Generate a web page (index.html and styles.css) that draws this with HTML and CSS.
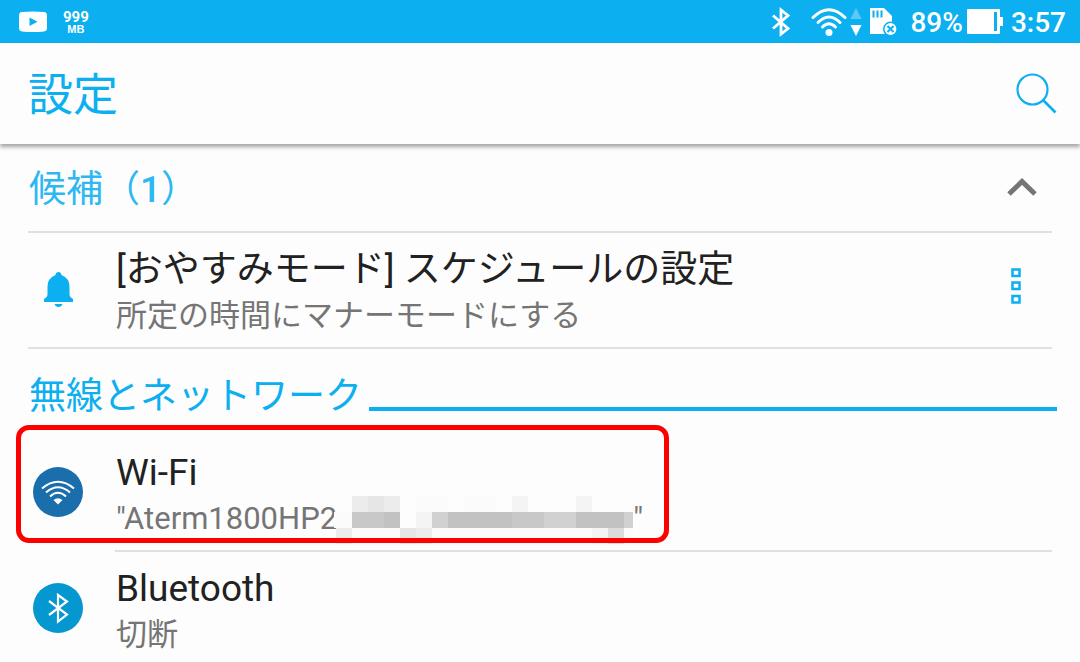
FILE: index.html
```
<!DOCTYPE html>
<html lang="ja">
<head>
    <meta charset="UTF-8">
    <meta name="viewport" content="width=device-width, initial-scale=1.0">
    <title>設定</title>
    <link rel="stylesheet" href="styles.css">
</head>
<body>
    <div class="status-bar">
        <div class="status-left">
            <svg width="30" height="22" viewBox="0 0 30 22">
                <path fill="#fff" fill-rule="evenodd" d="M4 1Q15 0 26 1Q29 1 29 5V17Q29 20 26 20.500Q15 21.500 4 20.500Q1 20 1 17V5Q1 1 4 1ZM11.500 6.500V15L19.500 10.700Z"/>
            </svg>
            <div class="data-limit">
                <span class="data-amount">999</span>
                <span class="data-unit">MB</span>
            </div>
        </div>
        <div class="status-right">
            <svg class="status-bluetooth" width="20" height="30" viewBox="0 0 20 30">
                <path fill="none" stroke="#fff" stroke-width="2.800" d="M2 8.500L17 21.500L10 27V3L17 8.500L2 21.500"/>
            </svg>
            <svg class="status-wifi" width="36" height="30" viewBox="0 0 36 30">
                <g fill="none" stroke="#fff" stroke-width="3" stroke-linecap="round">
                    <path d="M2 10.500Q18 -5 34 10.500"/>
                    <path d="M7 15.500Q18 4.500 29 15.500"/>
                    <path d="M11.500 20Q18 13.500 24.500 20"/>
                </g>
                <circle cx="18" cy="25.500" r="3.500" fill="#fff"/>
            </svg>
            <svg width="12" height="30" viewBox="0 0 12 30">
                <path fill="#5bc8f5" d="M6 1L11.500 12H.5Z"/>
                <path fill="#fff" d="M.5 18H11.500L6 29Z"/>
            </svg>
            <svg class="status-card" width="28" height="30" viewBox="0 0 28 30">
                <path fill="#fff" d="M0 1H14L22 9V27H0Z"/>
                <path stroke="#0cafef" stroke-width="2" d="M3.500 3.500V10.500M7.500 3.500V10.500M11.500 3.500V10.500"/>
                <circle cx="20.500" cy="22" r="6.700" fill="#fff" stroke="#0cafef" stroke-width="1.600"/>
                <path stroke="#0cafef" stroke-width="2" d="M17.500 19L23.500 25M23.500 19L17.500 25"/>
            </svg>
            <span class="status-text">89%</span>
            <svg class="status-battery" width="36" height="26" viewBox="0 0 36 26">
                <path fill="#fff" fill-rule="evenodd" d="M1 0H32Q33 0 33 1V8H36V17H33V24Q33 25 32 25H1Q0 25 0 24V1Q0 0 1 0ZM27 3V22H30V3Z"/>
            </svg>
            <span class="status-text">3:57</span>
        </div>
    </div>

    <header class="header">
        <h1 class="title">設定</h1>
        <button class="icon-button" aria-label="検索">
            <svg width="42" height="42" viewBox="0 0 42 42" fill="none" stroke="#0cafef">
                <circle cx="17.500" cy="16.500" r="15" stroke-width="2.200"/>
                <path d="M28 27L40.500 39.500" stroke-width="2.600"/>
            </svg>
        </button>
    </header>

    <main>
        <section>
            <div class="section-header suggestions">
                <h2 class="section-title">候補（<span class="count">1</span>）</h2>
                <button class="icon-button" aria-label="折りたたむ">
                    <svg width="30" height="20" viewBox="0 0 30 20">
                        <path fill="none" stroke="#757575" stroke-width="5" d="M2 16L15 3.500L28 16"/>
                    </svg>
                </button>
            </div>
            <div class="item suggestion">
                <svg class="item-icon" width="50" height="50" viewBox="0 0 50 50" fill="#0cafef">
                    <path d="M25.500 8Q28 8 28.500 11Q36.500 14 36.500 23V31Q36.500 33 40 35V38H11V35Q14.500 33 14.500 31V23Q14.500 14 22.500 11Q23 8 25.500 8Z"/>
                    <path d="M21.500 40H29.500Q28.500 43 25.500 43Q22.500 43 21.500 40Z"/>
                </svg>
                <a class="item-text" href="#">
                    <span class="item-title">[おやすみモード] スケジュールの設定</span>
                    <span class="item-summary">所定の時間にマナーモードにする</span>
                </a>
                <button class="icon-button more" aria-label="その他">
                    <svg width="10" height="38" viewBox="0 0 10 38" fill="none" stroke="#0cafef" stroke-width="2.500">
                        <path d="M1.500 2.500H8.500V9H1.500ZM1.500 15.500H8.500V22H1.500ZM1.500 29H8.500V35.500H1.500Z"/>
                    </svg>
                </button>
            </div>
        </section>

        <section>
            <div class="section-header network">
                <h2 class="section-title">無線とネットワーク</h2>
            </div>
            <div class="item highlighted">
                <svg class="item-icon" width="50" height="50" viewBox="0 0 50 50">
                    <circle cx="25" cy="25" r="25" fill="#1b6eac"/>
                    <g fill="none" stroke="#fff" stroke-width="2">
                        <path d="M9 21.500Q25 8 41 21.500"/>
                        <path d="M13 25.500Q25 15 37 25.500"/>
                        <path d="M17 29.500Q25 22 33 29.500"/>
                    </g>
                    <path fill="#fff" d="M20.500 33Q25 29.500 29.500 33L25 37.500Z"/>
                </svg>
                <a class="item-text" href="#">
                    <span class="item-title">Wi-Fi</span>
                    <span class="item-summary">"Aterm1800HP2<svg class="mosaic" width="299" height="48" viewBox="0 0 299 48" shape-rendering="crispEdges">
                        <path fill="#fbfbfb" d="M82 0h32v16h-32zM130 0h32v16h-32zM0 16h18v16H0zM18 32h48v16H18zM98 32h160v16H98zM290 32h9v16h-9z"/>
                        <path fill="#f4f4f4" d="M178 0h16v16h-16zM242 0h16v16h-16zM82 16h16v16H82zM258 32h16v16h-16z"/>
                        <path fill="#ececec" d="M18 0h16v16H18zM50 0h16v16H50zM2 32h16v16H2zM82 32h16v16H82z"/>
                        <path fill="#e6e6e6" d="M34 0h16v16H34zM66 32h16v16H66z"/>
                        <path fill="#dcdcdc" d="M274 32h16v16h-16z"/>
                        <path fill="#d1d1d1" d="M98 16h16v16H98zM210 16h32v16h-32zM290 16h9v16h-9z"/>
                        <path fill="#c8c8c8" d="M18 16h32v16H18zM178 16h32v16h-32z"/>
                        <path fill="#c2c2c2" d="M50 16h16v16H50zM114 16h64v16h-64zM242 16h48v16h-48z"/>
                    </svg>"</span>
                </a>
            </div>
            <div class="item">
                <svg class="item-icon" width="50" height="50" viewBox="0 0 50 50">
                    <circle cx="25" cy="25" r="25" fill="#0597cf"/>
                    <path fill="none" stroke="#fff" stroke-width="2.200" d="M16 18L34 31.500L25 38.500V12L34 18.500L16 32"/>
                </svg>
                <a class="item-text" href="#">
                    <span class="item-title">Bluetooth</span>
                    <span class="item-summary">切断</span>
                </a>
            </div>
        </section>
    </main>
</body>
</html>
```

FILE: styles.css
```
* {
    box-sizing: border-box;
}
body {
    margin: 0;
    background-color: #fdfdfd;
    color: #212121;
    font-family: Roboto, "Noto Sans CJK JP", sans-serif;
}
svg {
    display: block;
    flex-shrink: 0;
}
h1, h2 {
    margin: 0;
    font-weight: 400;
}
a {
    color: inherit;
    text-decoration: none;
}

/* Status bar */
.status-bar {
    display: flex;
    justify-content: space-between;
    align-items: center;
    height: 43px;
    padding: 0 14px 0 18px;
    background-color: #0cafef;
    color: #fff;
}
.status-left, .status-right {
    display: flex;
    align-items: center;
}
.status-left {
    gap: 15px;
}
.data-limit {
    display: flex;
    flex-direction: column;
    align-items: center;
    padding-top: 2px;
    font-weight: 700;
}
.data-amount {
    font-size: 15px;
    line-height: 13px;
}
.data-unit {
    font-family: "Liberation Sans", sans-serif;
    font-size: 11px;
    line-height: 11px;
}
.status-bluetooth {
    margin-right: 20px;
}
.status-wifi {
    margin-right: 3px;
}
.status-card {
    margin: 0 12px 0 8px;
}
.status-battery {
    margin: 0 8px 0 4px;
}
.status-text {
    padding-top: 2px;
    font-size: 28px;
    line-height: 32px;
    font-weight: 500;
}

/* Header */
.header {
    display: flex;
    justify-content: space-between;
    align-items: center;
    height: 101px;
    padding: 0 23px 0 28px;
    box-shadow: 0 3px 4px rgba(0, 0, 0, 0.35);
}
.title {
    padding-top: 4px;
    color: #0cafef;
    font-size: 45px;
    line-height: 60px;
}
.icon-button {
    padding: 0;
    border: none;
    background: none;
    cursor: pointer;
}

/* Sections */
.section-header {
    display: flex;
    justify-content: space-between;
    align-items: center;
    margin: 0 28px;
    color: #0cafef;
}
.section-title {
    padding: 4px 0 0 1px;
    font-size: 37px;
    line-height: 50px;
}
.suggestions {
    height: 89px;
    padding-right: 15px;
    border-bottom: 2px solid #e0e0e0;
    color: #2db8f1;
}
.count {
    font-weight: 500;
}
.network {
    height: 87px;
    margin-right: 23px;
    padding-top: 4px;
}
.network::after {
    content: "";
    flex: 1;
    height: 4px;
    margin: 28px 0 0 7px;
    background-color: #0cafef;
}

/* List items */
.item {
    position: relative;
    display: flex;
    align-items: center;
    height: 116px;
    margin-right: 28px;
    padding-left: 33px;
}
.item-icon {
    margin: 0 33px 4px 0;
}
.item-text {
    display: flex;
    flex: 1;
    flex-direction: column;
    justify-content: center;
    align-self: stretch;
    padding-top: 4px;
}
.item-title {
    font-size: 37px;
    line-height: 46px;
}
.item-summary {
    display: flex;
    color: #757575;
    font-size: 31px;
    line-height: 46px;
}
.suggestion::after, .highlighted::after {
    content: "";
    position: absolute;
    right: 0;
    bottom: 0;
    left: 28px;
    height: 2px;
    background-color: #e0e0e0;
}
.highlighted::after {
    left: 115px;
}
.more {
    margin: 0 31px 10px 0;
}
.mosaic {
    margin: 0 0 -2px -3px;
}

/* Frame around the connected network */
.highlighted::before {
    content: "";
    position: absolute;
    z-index: 1;
    top: -11px;
    left: 16px;
    width: 643px;
    height: 108px;
    border: 5px solid #f00;
    border-radius: 13px;
    pointer-events: none;
}
```
